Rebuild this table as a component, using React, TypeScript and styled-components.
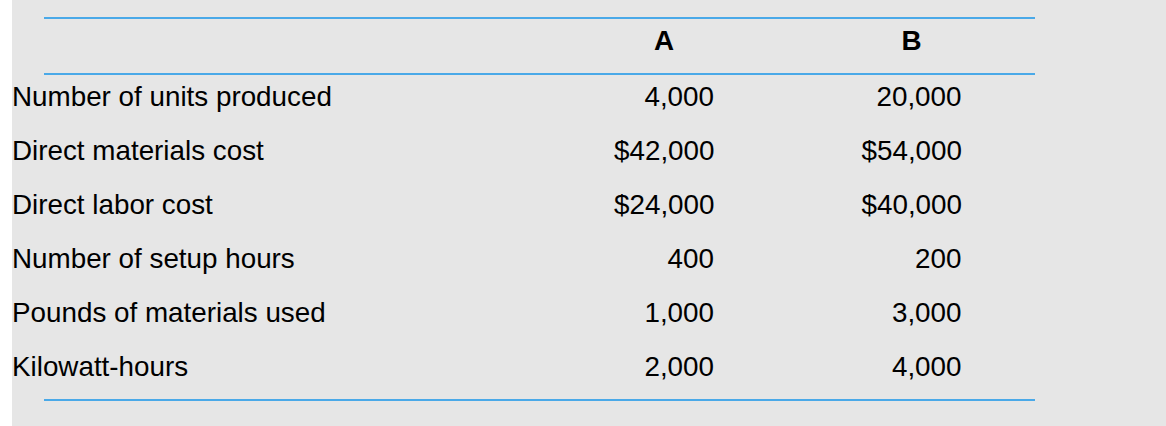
import React from 'react';
import styled, { createGlobalStyle } from 'styled-components';

const GlobalStyle = createGlobalStyle`
  html, body {
    margin: 0;
    padding: 0;
    background: #ffffff;
  }
  body {
    font-family: "Liberation Sans", Arial, Helvetica, sans-serif;
    color: #000000;
  }
`;

const Panel = styled.div`
  margin-left: 12px;
  min-height: 100vh;
  box-sizing: border-box;
  padding-top: 17px;
  background: #e6e6e6;
`;

const Rule = styled.div`
  height: 2px;
  width: 991px;
  margin-left: 32px;
  background: #4aa9e8;
`;

const Row = styled.div`
  display: grid;
  grid-template-columns: 454.5px 100px 100px;
  column-gap: 147.5px;
  box-sizing: border-box;
  height: 54px;
  padding-top: 5.5px;
  font-size: 27.8px;
  line-height: 32px;
`;

const Label = styled.div`
  white-space: nowrap;
`;

const Cell = styled.div<{ $head?: boolean }>`
  text-align: ${p => (p.$head ? 'center' : 'right')};
  font-weight: ${p => (p.$head ? 700 : 400)};
  white-space: nowrap;
`;

const rows: [string, string, string][] = [
  ['Number of units produced', '4,000', '20,000'],
  ['Direct materials cost', '$42,000', '$54,000'],
  ['Direct labor cost', '$24,000', '$40,000'],
  ['Number of setup hours', '400', '200'],
  ['Pounds of materials used', '1,000', '3,000'],
  ['Kilowatt-hours', '2,000', '4,000'],
];

const App: React.FC = () => {
  return (
    <>
      <GlobalStyle />
      <Panel>
        <Rule />
        <Row>
          <Label />
          <Cell $head>A</Cell>
          <Cell $head>B</Cell>
        </Row>
        <Rule />
        {rows.map(([label, a, b]) => (
          <Row key={label}>
            <Label>{label}</Label>
            <Cell>{a}</Cell>
            <Cell>{b}</Cell>
          </Row>
        ))}
        <Rule />
      </Panel>
    </>
  );
};

export default App;
